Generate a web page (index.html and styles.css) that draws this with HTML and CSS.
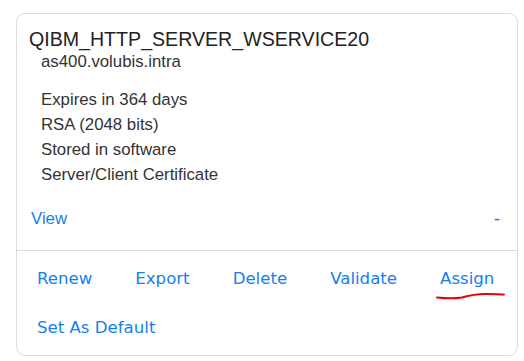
FILE: index.html
```html
<!DOCTYPE html>
<html lang="en">
<head>
    <meta charset="UTF-8">
    <meta name="viewport" content="width=device-width, initial-scale=1.0">
    <title>Certificate</title>
    <link rel="stylesheet" href="styles.css">
</head>
<body>
    <div class="card">
        <div class="card-body">
            <h3 class="cert-name">QIBM_HTTP_SERVER_WSERVICE20</h3>
            <p class="cert-host">as400.volubis.intra</p>

            <ul class="cert-info">
                <li>Expires in 364 days</li>
                <li>RSA (2048 bits)</li>
                <li>Stored in software</li>
                <li>Server/Client Certificate</li>
            </ul>

            <div class="view-row">
                <a href="#" class="view-link">View</a>
                <a href="#" class="toggle">-</a>
            </div>
        </div>

        <div class="card-actions">
            <div class="action-row">
                <a href="#" class="action">Renew</a>
                <a href="#" class="action">Export</a>
                <a href="#" class="action">Delete</a>
                <a href="#" class="action">Validate</a>
                <a href="#" class="action marked">Assign
                    <svg class="squiggle" width="70" height="8" viewBox="0 0 70 8">
                        <path d="M1 5.5 C 10 6.5, 20 6.5, 26 5.5 C 34 3, 42 2, 50 2 C 58 2, 63 2.5, 68 2.5" fill="none" stroke="#e8000b" stroke-width="2" stroke-linecap="round"/>
                    </svg>
                </a>
            </div>
            <div class="action-row second">
                <a href="#" class="action">Set As Default</a>
            </div>
        </div>
    </div>
</body>
</html>
```

FILE: styles.css
```css
body {
    margin: 0;
    padding: 0;
    background-color: #fff;
    font-family: "Liberation Sans", Arial, sans-serif;
    color: #333;
}

a {
    color: #1580f0;
    text-decoration: none;
}

.card {
    margin: 13px 7px 0 16px;
    width: 500px;
    border: 1px solid #dcdcdc;
    border-radius: 9px;
    background-color: #fff;
}

.card-body {
    padding: 13px 15px 19px 14px;
}

.cert-name {
    margin: 0 0 0 -2px;
    font-size: 19.6px;
    font-weight: normal;
    line-height: 24px;
    color: #222;
}

.cert-host {
    margin: 1px 0 0 10px;
    font-size: 16.8px;
    line-height: 20px;
}

.cert-info {
    list-style: none;
    margin: 15px 0 0 10px;
    padding: 0;
}

.cert-info li {
    font-size: 16.8px;
    line-height: 25px;
}

.view-row {
    display: flex;
    justify-content: space-between;
    margin-top: 19px;
    font-size: 16.8px;
    line-height: 25px;
}

.toggle {
    margin-right: 2px;
    font-size: 19px;
}

.card-actions {
    padding: 4px 0 3px;
    border-top: 1px solid #dcdcdc;
}

.action-row {
    display: flex;
    gap: 3px;
    white-space: nowrap;
}

.action-row.second {
    margin-top: 1px;
}

.action {
    position: relative;
    padding: 12px 20px;
    font-family: "DejaVu Sans", Verdana, sans-serif;
    font-size: 16.6px;
    line-height: 24px;
}

.squiggle {
    position: absolute;
    left: 16px;
    top: 37px;
}
```
